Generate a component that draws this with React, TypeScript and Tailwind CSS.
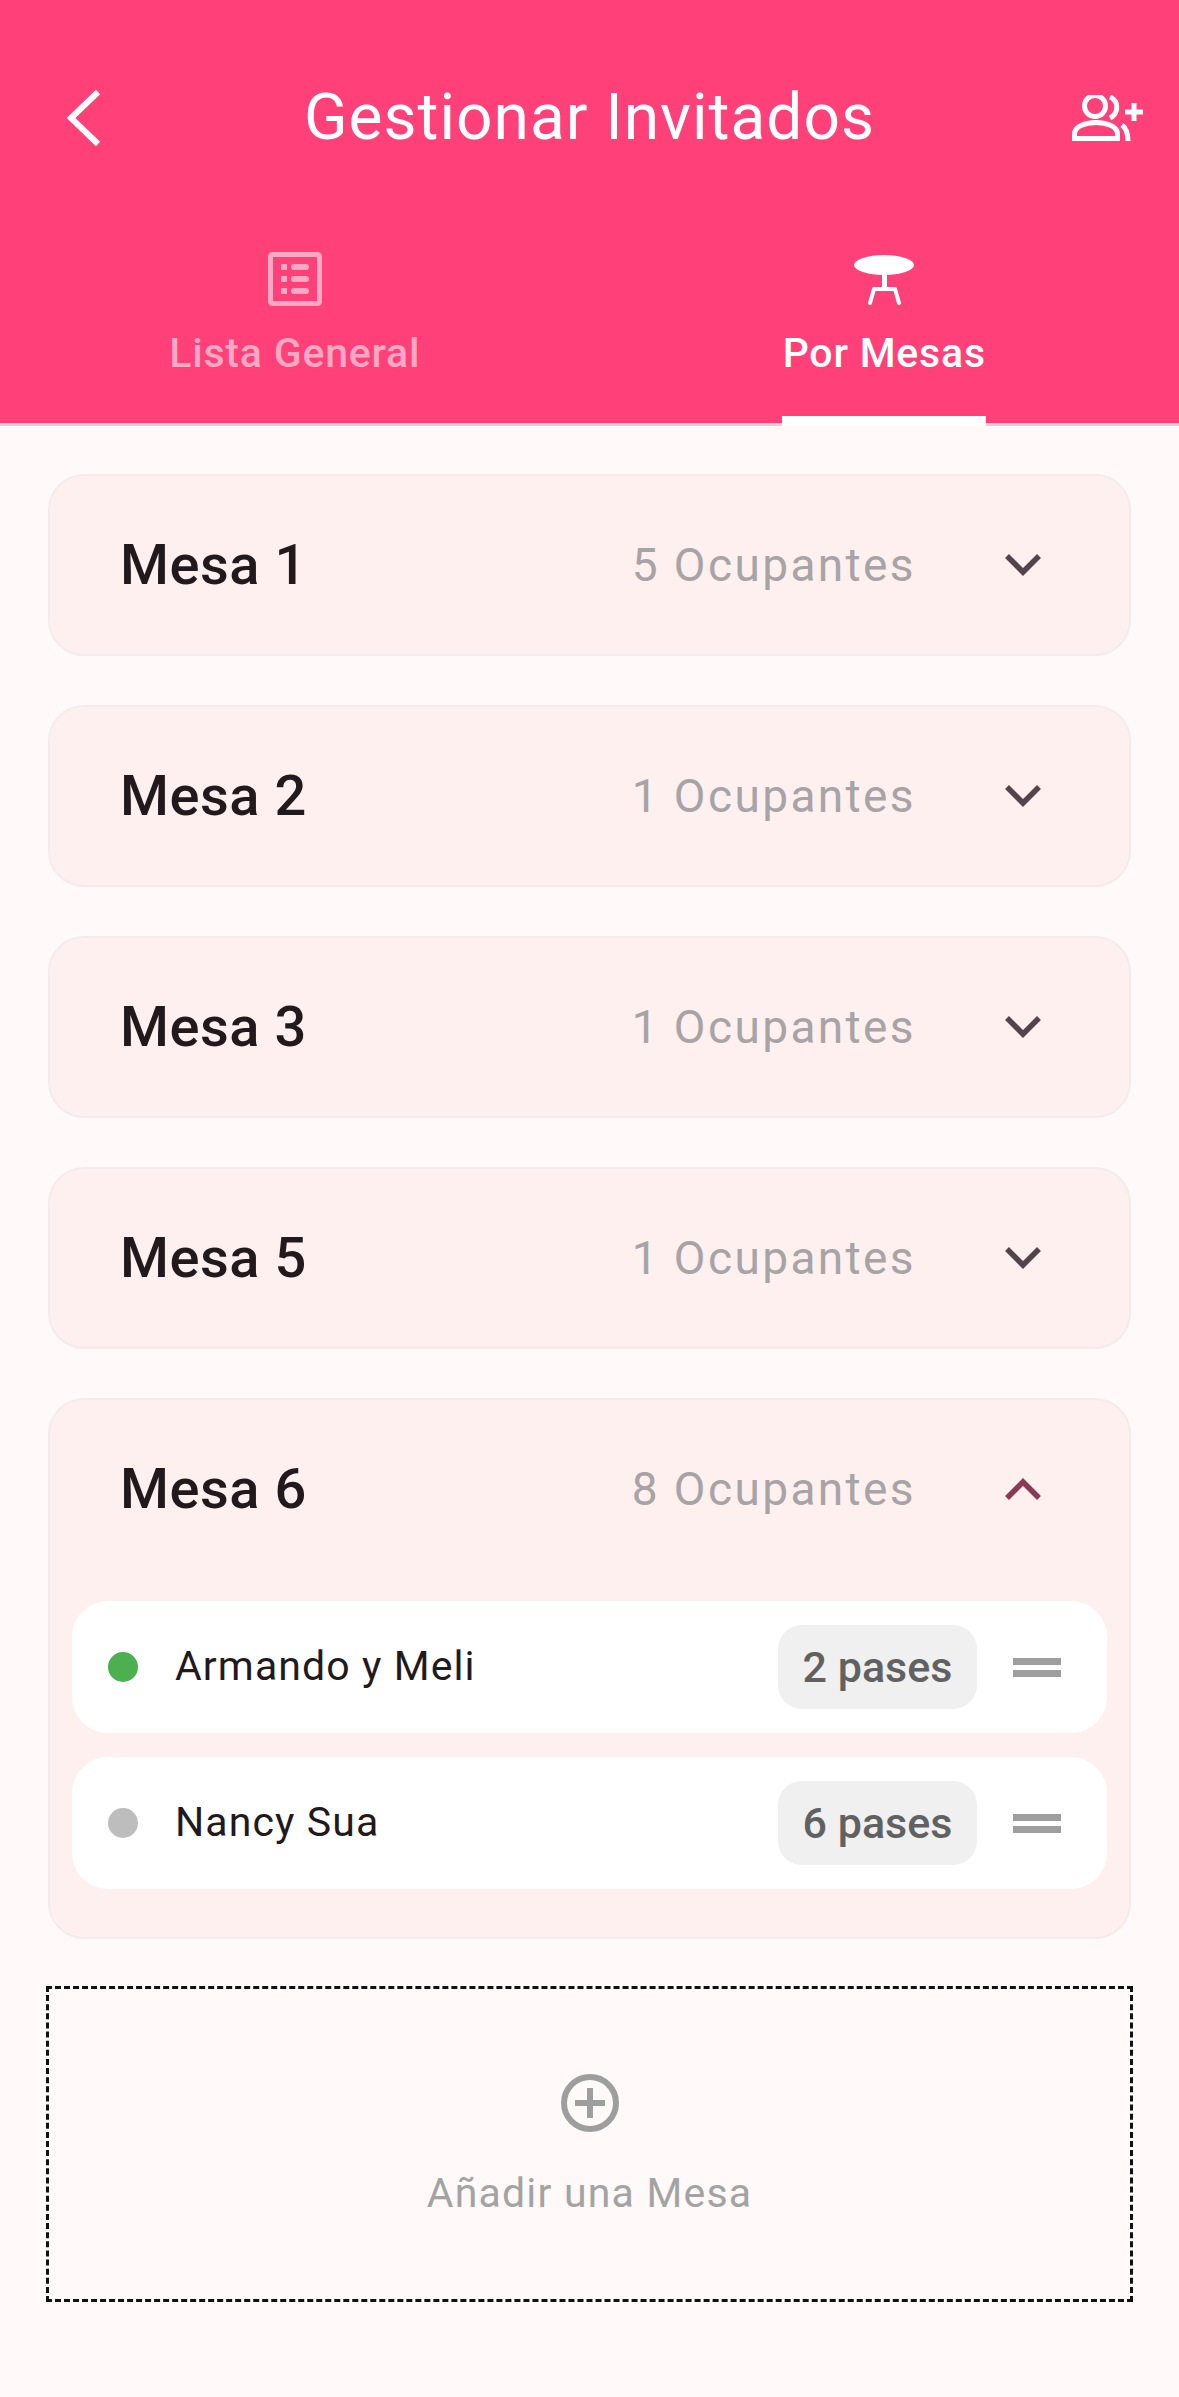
import React from 'react';

const FONT = "font-['Roboto',sans-serif]";

const tables = [
    { name: 'Mesa 1', count: 5 },
    { name: 'Mesa 2', count: 1 },
    { name: 'Mesa 3', count: 1 },
    { name: 'Mesa 5', count: 1 },
];

const guests = [
    { name: 'Armando y Meli', passes: '2 pases', dot: 'bg-[#4caf50]' },
    { name: 'Nancy Sua', passes: '6 pases', dot: 'bg-[#bdbdbd]' },
];

const Chevron = ({ up = false }: { up?: boolean }) => (
    <svg width="36" height="24" viewBox="0 0 36 24" fill="none" className={up ? 'text-[#8a3a55]' : 'text-[#54434a]'}>
        <path d={up ? 'M2 21 L18 5 L34 21' : 'M2 3 L18 19 L34 3'} stroke="currentColor" strokeWidth="5.5" />
    </svg>
);

const TableHeader = ({ name, count, open = false }: { name: string; count: number; open?: boolean }) => (
    <div className="flex items-center h-[178px] pl-[70px] pr-[88px]">
        <span className="flex-1 text-[56px] font-medium text-[#22191c] tracking-[0.5px]">{name}</span>
        <span className="text-[46px] text-[#a8a3a5] tracking-[2.4px]">{count} Ocupantes</span>
        <span className="ml-[89px] flex w-[36px] justify-center"><Chevron up={open} /></span>
    </div>
);

const GuestRow = ({ name, passes, dot }: { name: string; passes: string; dot: string }) => (
    <div className="flex items-center h-[132px] rounded-[36px] bg-white pl-[36px] pr-[46px]">
        <span className={`h-[30px] w-[30px] rounded-full ${dot}`} />
        <span className="ml-[37px] flex-1 text-[41px] text-[#22191c] tracking-[1.1px]">{name}</span>
        <span className="flex h-[84px] w-[199px] items-center justify-center rounded-[24px] bg-[#f0f0f0] text-[43px] font-medium text-[#616161]">{passes}</span>
        <span className="ml-[36px] flex w-[48px] flex-col gap-[5px]">
            <span className="h-[7px] bg-[#9e9e9e]" />
            <span className="h-[7px] bg-[#9e9e9e]" />
        </span>
    </div>
);

export default function App() {
    return (
        <div className={`${FONT} min-h-[2397px] w-[1179px] bg-[#fff9f9]`}>
            {/* App bar + tabs */}
            <div className="h-[426px] border-b-[3px] border-[#e6cfd6] bg-[#ff4079]">
                <div className="flex h-[236px] items-center justify-between pl-[66px] pr-[35px]">
                    <svg width="36" height="58" viewBox="0 0 36 58" fill="none" className="text-white">
                        <path d="M32 3 L5 29 L32 55" stroke="currentColor" strokeWidth="6" />
                    </svg>
                    <span className="ml-[5px] text-[64px] text-white tracking-[1px]">Gestionar Invitados</span>
                    <svg width="72" height="46" viewBox="0 0 72 46" fill="none" stroke="white" strokeWidth="5">
                        <circle cx="23" cy="11" r="10.500" />
                        <path d="M2.500 43.500 V39 C2.500 31 14 27.500 24 27.500 C34 27.500 45.500 31 45.500 39 V43.500 Z" />
                        <path d="M38 2 C47 6 47 18 38 23" />
                        <path d="M50 30 C54 33 56 37 56 46" />
                        <path d="M53 17 H71 M62 8 V26" />
                    </svg>
                </div>
                <div className="flex h-[187px]">
                    <div className="flex flex-1 flex-col items-center pt-[16px]">
                        <svg width="54" height="54" viewBox="0 0 54 54" fill="none" className="text-[#ffa8c4]">
                            <rect x="2.500" y="2.500" width="49" height="49" rx="2" stroke="currentColor" strokeWidth="5" />
                            <rect x="13" y="12" width="6" height="6" fill="currentColor" />
                            <rect x="13" y="24" width="6" height="6" fill="currentColor" />
                            <rect x="13" y="36" width="6" height="6" fill="currentColor" />
                            <rect x="23" y="12" width="18" height="6" rx="3" fill="currentColor" />
                            <rect x="23" y="24" width="18" height="6" rx="3" fill="currentColor" />
                            <rect x="23" y="36" width="18" height="6" rx="3" fill="currentColor" />
                        </svg>
                        <span className="mt-[17px] text-[41px] font-medium text-[#ffa8c4] tracking-[0.8px]">Lista General</span>
                    </div>
                    <div className="flex flex-1 flex-col items-center pt-[16px]">
                        <svg width="60" height="54" viewBox="0 0 60 54" fill="none">
                            <ellipse cx="30" cy="13" rx="30" ry="10" fill="white" />
                            <path d="M30.500 20 V37" stroke="white" strokeWidth="5" />
                            <path d="M16 51 L20 37 H41 L45 51" stroke="white" strokeWidth="4" strokeLinecap="round" strokeLinejoin="round" />
                        </svg>
                        <span className="mt-[17px] text-[41px] font-medium text-white tracking-[0.8px]">Por Mesas</span>
                        <span className="mt-auto -mb-[3px] h-[10px] w-[204px] bg-white" />
                    </div>
                </div>
            </div>

            {/* Tables */}
            <div className="flex flex-col gap-[49px] px-[48px] pt-[48px]">
                {tables.map((t) => (
                    <div key={t.name} className="rounded-[36px] border-[2px] border-[#f3eced] bg-[#fff0f0]">
                        <TableHeader name={t.name} count={t.count} />
                    </div>
                ))}
                <div className="rounded-[36px] border-[2px] border-[#f3eced] bg-[#fff0f0] pb-[48px]">
                    <TableHeader name="Mesa 6" count={8} open />
                    <div className="flex flex-col gap-[24px] px-[22px] pt-[23px]">
                        {guests.map((g) => (
                            <GuestRow key={g.name} {...g} />
                        ))}
                    </div>
                </div>
            </div>

            {/* Add table */}
            <div className="mx-[46px] mt-[47px] flex h-[316px] flex-col items-center justify-center border-[3px] border-dashed border-[#111] pt-[10px]">
                <svg width="60" height="60" viewBox="0 0 60 60" fill="none" stroke="#9e9e9e" strokeWidth="6">
                    <circle cx="30" cy="30" r="26" />
                    <path d="M30 15 V45 M15 30 H45" />
                </svg>
                <span className="mt-[30px] text-[41px] text-[#a3a3a3] tracking-[1.2px]">Añadir una Mesa</span>
            </div>
        </div>
    );
}
